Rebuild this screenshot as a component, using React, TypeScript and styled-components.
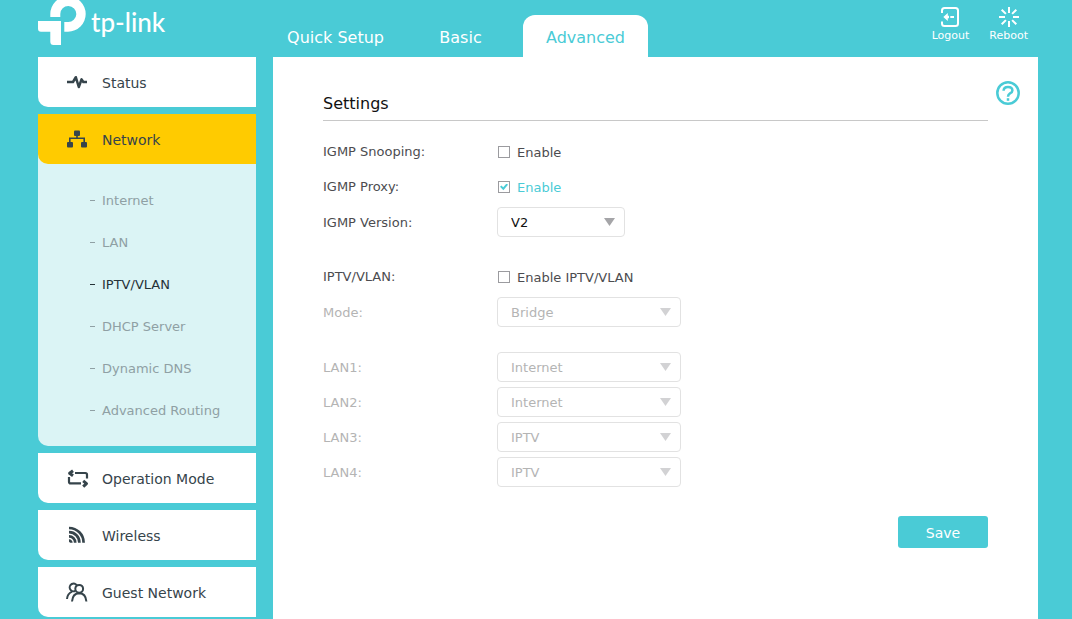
import React from "react";
import styled, { createGlobalStyle } from "styled-components";

const teal = "#4acbd6";
const ink = "#36444b";

const GlobalStyle = createGlobalStyle`
  *, *::before, *::after { box-sizing: border-box; }
  body {
    margin: 0;
    background: ${teal};
    color: ${ink};
    font-family: "DejaVu Sans", Verdana, sans-serif;
    font-size: 13px;
  }
  a { color: inherit; text-decoration: none; }
  svg { display: block; flex: none; }
  input, select, button { font: inherit; }
`;

const Page = styled.div`
  display: flex;
  flex-direction: column;
  min-height: 100vh;
  padding: 0 34px 0 38px;
`;

const Header = styled.header`
  display: flex;
  align-items: flex-end;
  height: 57px;
`;

const Brand = styled.a`
  display: flex;
  align-self: flex-start;
  align-items: flex-start;
  gap: 5px;
  width: 235px;
  color: #fff;
`;

const BrandName = styled.span`
  font-family: Lato, sans-serif;
  font-size: 26px;
  font-weight: 500;
  line-height: 44px;
`;

const Tabs = styled.nav`
  display: flex;
  flex: 1;
`;

const Tab = styled.a<{ $active?: boolean }>`
  width: 125px;
  height: 42px;
  line-height: 46px;
  font-size: 16px;
  text-align: center;
  border-radius: 12px 12px 0 0;
  color: ${(p) => (p.$active ? teal : "#fff")};
  background: ${(p) => (p.$active ? "#fff" : "transparent")};
`;

const Tools = styled.div`
  display: flex;
  align-self: flex-start;
  gap: 20px;
  padding: 7px 10px 0 0;
`;

const ToolButton = styled.button`
  display: flex;
  flex-direction: column;
  align-items: center;
  gap: 2px;
  padding: 0;
  border: 0;
  background: none;
  color: #fff;
  font-size: 11px;
  line-height: 14px;
  cursor: pointer;
`;

const Body = styled.div`
  display: flex;
  flex: 1;
  gap: 17px;
`;

const Sidebar = styled.nav`
  display: flex;
  flex-direction: column;
  gap: 7px;
  width: 218px;
  flex: none;
`;

const MenuGroup = styled.div`
  background: #dbf4f5;
  border-radius: 0 0 0 10px;
`;

const MenuItem = styled.a<{ $active?: boolean }>`
  display: flex;
  align-items: center;
  gap: 13px;
  height: 50px;
  padding-left: 28px;
  font-size: 14px;
  line-height: 20px;
  border-radius: 0 0 0 10px;
  background: ${(p) => (p.$active ? "#ffcb00" : "#fff")};
`;

const MenuText = styled.span`
  padding-top: 2px;
`;

const SubMenu = styled.ul`
  margin: 0;
  padding: 15px 0 15px 51px;
  list-style: none;
`;

const SubItem = styled.li<{ $active?: boolean }>`
  display: flex;
  align-items: center;
  gap: 6px;
  height: 42px;
  color: ${(p) => (p.$active ? "#263238" : "#8fa0a4")};

  &::before {
    content: "";
    width: 7px;
    height: 1px;
    border-right: 1px solid transparent;
    border-left: 1px solid transparent;
    background: currentColor;
    background-clip: padding-box;
  }
`;

const Panel = styled.main`
  display: flex;
  align-items: flex-start;
  gap: 8px;
  flex: 1;
  min-width: 0;
  padding: 24px 18px 30px 50px;
  background: #fff;
`;

const Form = styled.form`
  flex: 1;
  min-width: 0;
  padding-top: 10px;
`;

const Title = styled.h1`
  margin: 0 0 16px;
  padding-bottom: 3px;
  border-bottom: 1px solid #c8c8c8;
  color: #111;
  font-size: 16px;
  font-weight: 400;
  line-height: 26px;
`;

const Fields = styled.div`
  display: flex;
  flex-direction: column;
  gap: 5px;
  margin-bottom: 25px;
`;

const Row = styled.div<{ $disabled?: boolean }>`
  display: flex;
  align-items: center;
  height: 30px;
  color: ${(p) => (p.$disabled ? "#b4b4b4" : "#4c4c50")};
`;

const Label = styled.label<{ $select?: boolean }>`
  width: 174px;
  flex: none;
  padding-top: ${(p) => (p.$select ? 2 : 0)}px;
  line-height: 18px;
`;

const CheckLabel = styled.label<{ $checked?: boolean }>`
  display: flex;
  align-items: center;
  gap: 7px;
  padding-left: 1px;
  line-height: 18px;
  color: ${(p) => (p.$checked ? teal : "inherit")};
`;

const CheckText = styled.span`
  padding-top: 2px;
`;

const Checkbox = styled.input`
  appearance: none;
  display: grid;
  place-items: center;
  width: 12px;
  height: 12px;
  margin: 0;
  border: 1px solid #9b9b9f;
  background: #fff;

  &:checked::before {
    content: "";
    width: 8px;
    height: 7px;
    background: ${teal};
    clip-path: polygon(0 45%, 18% 28%, 40% 52%, 82% 0, 100% 18%, 42% 96%);
  }
`;

const SelectBox = styled.div<{ $wide?: boolean; $disabled?: boolean }>`
  position: relative;
  width: ${(p) => (p.$wide ? 184 : 128)}px;

  &::after {
    content: "";
    position: absolute;
    top: 11px;
    right: 10px;
    width: 11px;
    height: 8px;
    background: ${(p) => (p.$disabled ? "#d2d2d4" : "#a5a5a8")};
    clip-path: polygon(0 0, 100% 0, 50% 100%);
    pointer-events: none;
  }
`;

const Select = styled.select`
  appearance: none;
  display: block;
  width: 100%;
  height: 30px;
  padding: 0 28px 0 13px;
  border: 1px solid #e2e2e2;
  border-radius: 4px;
  background: #fff;
  color: #111;

  &:disabled {
    color: #b4b4b4;
    opacity: 1;
  }
`;

const Actions = styled.div`
  display: flex;
  justify-content: flex-end;
  padding-top: 4px;
`;

const SaveButton = styled.button`
  width: 90px;
  height: 32px;
  padding: 2px 0 0;
  border: 0;
  border-radius: 3px;
  background: ${teal};
  color: #fff;
  font-size: 14px;
  cursor: pointer;
`;

const HelpButton = styled.button`
  padding: 0;
  border: 0;
  background: none;
  color: ${teal};
  cursor: pointer;
`;

const LogoMark = () => (
  <svg width="48" height="45" viewBox="38 0 48 45" fill="#fff" aria-hidden="true">
    <path d="M50.3 17V14A17.7 17.7 0 1 1 68 31.7H64.3V22H68A8 8 0 1 0 60.3 14V17Z" />
    <path d="M38 21H61V45H53.5Q50.3 45 50.3 41.5V31.7H41Q38 31.7 38 28.5Z" />
  </svg>
);

const StatusIcon = () => (
  <svg width="23" height="24" viewBox="66 70 23 24" fill="none" stroke={ink} strokeWidth="2.5" strokeLinejoin="round">
    <path d="M67 82H73L75.8 77.2L78.8 87L81.6 79.3L83.3 82H87" />
  </svg>
);

const NetworkIcon = () => (
  <svg width="23" height="24" viewBox="66 127 23 24" fill={ink}>
    <rect x="74" y="130.5" width="6" height="5.5" rx="1" />
    <rect x="67" y="142" width="6" height="5.5" rx="1" />
    <rect x="81" y="142" width="6" height="5.5" rx="1" />
    <path d="M77 135V138.2M69.8 143V138.2H84.2V143" fill="none" stroke={ink} strokeWidth="1.6" />
  </svg>
);

const ModeIcon = () => (
  <svg width="23" height="24" viewBox="66 466 23 24" fill="none" stroke={ink} strokeWidth="2.2" strokeLinejoin="round">
    <path d="M75 473H85.3Q87 473 87 474.7V478.5" />
    <path d="M81 483.4H70.7Q69 483.4 69 481.7V477" />
    <path d="M73 470.8L69.6 473.3L73 475.8" strokeWidth="3" />
    <path d="M83.2 480.8L86.5 483.6L83.2 486.6" strokeWidth="3" />
  </svg>
);

const WirelessIcon = () => (
  <svg width="23" height="24" viewBox="66 523 23 24" fill="none" stroke={ink} strokeWidth="2.7">
    <path d="M69 528A14.6 14.6 0 0 1 83.6 542.7" />
    <path d="M69 532.2A10.3 10.3 0 0 1 79.4 542.7" />
    <path d="M69 536.4A6.1 6.1 0 0 1 75.2 542.7" />
    <path d="M69 540.6A2.2 2.2 0 0 1 71.3 542.7" />
  </svg>
);

const GuestIcon = () => (
  <svg width="23" height="24" viewBox="66 580 23 24" fill="none" stroke={ink} strokeWidth="2">
    <path d="M75.2 591A3.9 3.9 0 1 1 77 585.6" />
    <circle cx="79.2" cy="588.8" r="3.9" />
    <path d="M67 599Q67.4 593.8 72 591.7" />
    <path d="M72 601.5Q72.6 593.3 79.2 593.2Q85.8 593.3 86.4 601.5" />
  </svg>
);

const LogoutIcon = () => (
  <svg width="20" height="20" viewBox="940 7 20 20" fill="none" stroke="#fff" strokeWidth="2">
    <path d="M942 13V10.5Q942 8 944.5 8H955.5Q958 8 958 10.5V23.5Q958 26 955.5 26H944.5Q942 26 942 23.5V21.5" />
    <path d="M943.3 17L947.8 13V15.8H949V18.2H947.8V21Z" fill="#fff" stroke="none" />
    <path d="M950.3 17H954" />
  </svg>
);

const RebootIcon = () => (
  <svg width="20" height="20" viewBox="-10 -10 20 20" stroke="#fff" strokeWidth="2">
    <path d="M0-10V-4M0 4V10M-10 0H-4M4 0H10M-7.3-7.3L-3.1-3.1M7.3 7.3L3.1 3.1M7.3-7.3L3.1-3.1M-7.3 7.3L-3.1 3.1" />
  </svg>
);

const HelpIcon = () => (
  <svg width="24" height="24" viewBox="0 0 24 24" fill="none" stroke={teal} strokeWidth="2.5">
    <circle cx="12" cy="12" r="10.7" />
    <path d="M7.6 9.8Q7.6 5.9 12 5.9Q16.4 5.9 16.4 9.4Q16.4 11.2 14 12.3Q12 13.4 12 15.8" />
    <path d="M12 17.2V19.8" />
  </svg>
);

const subItems = ["Internet", "LAN", "IPTV/VLAN", "DHCP Server", "Dynamic DNS", "Advanced Routing"];

const ports = [
  { name: "LAN1", value: "Internet" },
  { name: "LAN2", value: "Internet" },
  { name: "LAN3", value: "IPTV" },
  { name: "LAN4", value: "IPTV" },
];

function CheckField({ id, label, text, initial = false }: { id: string; label: string; text: string; initial?: boolean }) {
  const [checked, setChecked] = React.useState(initial);
  return (
    <Row>
      <Label htmlFor={id}>{label}</Label>
      <CheckLabel $checked={checked}>
        <Checkbox id={id} type="checkbox" checked={checked} onChange={(e) => setChecked(e.target.checked)} />
        <CheckText>{text}</CheckText>
      </CheckLabel>
    </Row>
  );
}

function SelectField({ id, label, value, options, wide, disabled }: {
  id: string;
  label: string;
  value: string;
  options: string[];
  wide?: boolean;
  disabled?: boolean;
}) {
  return (
    <Row $disabled={disabled}>
      <Label htmlFor={id} $select>{label}</Label>
      <SelectBox $wide={wide} $disabled={disabled}>
        <Select id={id} defaultValue={value} disabled={disabled}>
          {options.map((o) => (
            <option key={o}>{o}</option>
          ))}
        </Select>
      </SelectBox>
    </Row>
  );
}

export default function App() {
  return (
    <>
      <GlobalStyle />
      <Page>
        <Header>
          <Brand href="#">
            <LogoMark />
            <BrandName>tp-link</BrandName>
          </Brand>
          <Tabs>
            <Tab href="#quick">Quick Setup</Tab>
            <Tab href="#basic">Basic</Tab>
            <Tab href="#advanced" $active>Advanced</Tab>
          </Tabs>
          <Tools>
            <ToolButton type="button"><LogoutIcon />Logout</ToolButton>
            <ToolButton type="button"><RebootIcon />Reboot</ToolButton>
          </Tools>
        </Header>
        <Body>
          <Sidebar>
            <MenuItem href="#status"><StatusIcon /><MenuText>Status</MenuText></MenuItem>
            <MenuGroup>
              <MenuItem href="#network" $active><NetworkIcon /><MenuText>Network</MenuText></MenuItem>
              <SubMenu>
                {subItems.map((item) => (
                  <SubItem key={item} $active={item === "IPTV/VLAN"}>
                    <a href="#network">{item}</a>
                  </SubItem>
                ))}
              </SubMenu>
            </MenuGroup>
            <MenuItem href="#mode"><ModeIcon /><MenuText>Operation Mode</MenuText></MenuItem>
            <MenuItem href="#wireless"><WirelessIcon /><MenuText>Wireless</MenuText></MenuItem>
            <MenuItem href="#guest"><GuestIcon /><MenuText>Guest Network</MenuText></MenuItem>
          </Sidebar>
          <Panel>
            <Form onSubmit={(e) => e.preventDefault()}>
              <Title>Settings</Title>
              <Fields>
                <CheckField id="snooping" label="IGMP Snooping:" text="Enable" />
                <CheckField id="proxy" label="IGMP Proxy:" text="Enable" initial />
                <SelectField id="version" label="IGMP Version:" value="V2" options={["V2", "V3"]} />
              </Fields>
              <Fields>
                <CheckField id="iptv" label="IPTV/VLAN:" text="Enable IPTV/VLAN" />
                <SelectField id="mode" label="Mode:" value="Bridge" options={["Bridge"]} wide disabled />
              </Fields>
              <Fields>
                {ports.map((p) => (
                  <SelectField key={p.name} id={p.name} label={`${p.name}:`} value={p.value} options={["Internet", "IPTV"]} wide disabled />
                ))}
              </Fields>
              <Actions>
                <SaveButton type="submit">Save</SaveButton>
              </Actions>
            </Form>
            <HelpButton type="button" aria-label="Help"><HelpIcon /></HelpButton>
          </Panel>
        </Body>
      </Page>
    </>
  );
}
